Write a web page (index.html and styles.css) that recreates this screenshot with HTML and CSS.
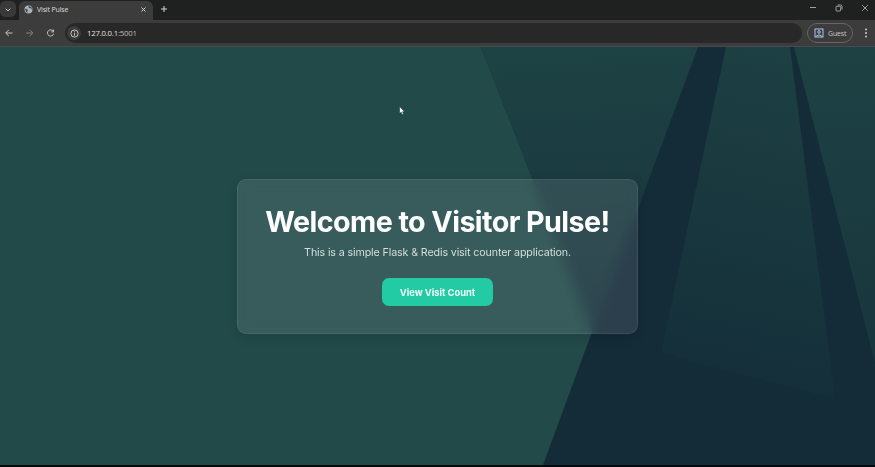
FILE: index.html
```html
<!DOCTYPE html>
<html lang="en">
<head>
<meta charset="utf-8">
<title>Visit Pulse</title>
<link rel="stylesheet" href="styles.css">
</head>
<body>
<header class="tabs">
  <div class="tab-search"><svg width="16" height="16" viewBox="0 0 16 16"><path d="M5.8 7.7l2.2 2.2 2.2-2.2"/></svg></div>
  <div class="tab">
    <svg class="globe" width="9" height="9" viewBox="0 0 9 9"><circle cx="4.5" cy="4.5" r="4"/><path d="M1 3.8l1.8.2 1.2 1.2-.8 1 .5 1.8-1.6-1zM4.8.9L4.4 2.4l1.3.8 1.2-.2.5 1.1.9.2-.8-2z"/></svg>
    <span class="tab-title">Visit Pulse</span>
    <svg class="close" width="7" height="7" viewBox="0 0 7 7"><path d="M1.5 1.5l4 4M5.5 1.5l-4 4"/></svg>
  </div>
  <svg class="new-tab" width="8" height="8" viewBox="0 0 8 8"><path d="M4 1v6M1 4h6"/></svg>
  <div class="window-buttons">
    <svg width="8" height="8" viewBox="0 0 8 8"><path d="M1 3.5h6"/></svg>
    <svg width="8" height="8" viewBox="0 0 8 8"><rect x="1" y="2.3" width="4.7" height="4.7" rx="1"/><path d="M2.5 1h3Q7 1 7 2.5v3"/></svg>
    <svg width="8" height="8" viewBox="0 0 8 8"><path d="M1.2 1.2l5.6 5.6M6.8 1.2L1.2 6.8"/></svg>
  </div>
</header>
<nav class="toolbar">
  <svg class="nav-icon" width="10" height="10" viewBox="0 0 10 10"><path d="M8.5 5H1.8M4.8 1.9L1.7 5l3.1 3.1"/></svg>
  <svg class="nav-icon dim" width="10" height="10" viewBox="0 0 10 10"><path d="M1 5h6.7M4.7 1.9L7.8 5 4.7 8.1"/></svg>
  <svg class="nav-icon" width="10" height="10" viewBox="0 0 10 10"><path d="M7.3 3.5A3.1 3.1 0 1 0 7.6 5.6M7.5 1.5v2.4H5.1"/></svg>
  <div class="address">
    <span class="info"><svg width="9" height="9" viewBox="0 0 9 9"><circle cx="4.5" cy="4.5" r="3.6"/><path d="M4.5 4.1v2.5M4.5 2.3v1"/></svg></span>
    <span class="url">127.0.0.1<span class="port">:5001</span></span>
  </div>
  <div class="guest">
    <svg width="10" height="10" viewBox="0 0 10 10"><rect x="1" y="1" width="8" height="8"/><circle cx="5" cy="4" r="1.3"/><path d="M2 8.3Q5 5.3 8 8.3"/></svg>
    <span>Guest</span>
  </div>
  <svg class="menu" width="4" height="10" viewBox="0 0 4 10"><circle cx="2" cy="1.5" r="1"/><circle cx="2" cy="5" r="1"/><circle cx="2" cy="8.5" r="1"/></svg>
</nav>
<main class="page">
  <svg class="backdrop" width="875" height="418" viewBox="0 0 875 418">
    <defs>
      <linearGradient id="g1" gradientUnits="userSpaceOnUse" x1="580" y1="0" x2="600" y2="285"><stop stop-color="#1e4344"/><stop offset="1" stop-color="#17323c"/></linearGradient>
      <linearGradient id="g2" gradientUnits="userSpaceOnUse" x1="780" y1="0" x2="700" y2="345"><stop stop-color="#1d4043"/><stop offset="1" stop-color="#142e39"/></linearGradient>
      <linearGradient id="g3" gradientUnits="userSpaceOnUse" x1="830" y1="0" x2="860" y2="320"><stop stop-color="#1e4244"/><stop offset="1" stop-color="#17353d"/></linearGradient>
    </defs>
    <path fill="#142b38" d="M0 0h875v418H0z"/>
    <path fill="#214a49" d="M0 0h481l111 285-49 133H0z"/>
    <path fill="url(#g1)" d="M481 0h217L592 285z"/>
    <path fill="url(#g2)" d="M726 0h64l45 352-174-46z"/>
    <path fill="url(#g3)" d="M794 0h81v316z"/>
  </svg>
  <section class="card">
    <h1>Welcome to Visitor Pulse!</h1>
    <p>This is a simple Flask &amp; Redis visit counter application.</p>
    <a class="button">View Visit Count</a>
  </section>
  <svg class="cursor" width="7" height="10" viewBox="0 0 7 10"><path d="M.6.6v7l1.6-1.4 1.1 2.5 1.3-.6-1.1-2.4h2.1z"/></svg>
</main>
</body>
</html>
```
FILE: styles.css
```css
* { box-sizing: border-box; }
body { margin: 0; width: 875px; height: 467px; overflow: hidden; background: #050b0c; font-family: Inter, "Liberation Sans", sans-serif; }
svg { display: block; flex: none; fill: none; stroke: #d5d7d6; stroke-width: 1; }
.tabs { height: 20px; display: flex; align-items: center; background: #1e211f; }
.tab-search { width: 16px; height: 16px; margin: -3px 3px 0 0; border-radius: 5px; background: #383938; }
.tab { width: 134px; height: 19px; margin-top: 1px; padding: 0 6px 3px 5px; display: flex; align-items: center; background: #3c3c3c; border-radius: 6px 6px 0 0; }
.globe { stroke: none; }
.globe circle { fill: #a9b4b9; }
.globe path { fill: #424b50; }
.tab-title { margin-left: 4px; font: 7px "Open Sans", sans-serif; letter-spacing: -.15px; color: #dedede; }
.close { margin-left: auto; }
.new-tab { margin: -3px 0 0 7px; }
.window-buttons { margin: -4px 6px 0 auto; display: flex; gap: 18px; }
.window-buttons svg { stroke-width: .7; }
.toolbar { height: 27px; padding: 0 7px 0 4px; display: flex; align-items: center; background: #3c3c3c; border-bottom: 1px solid #474b4b; }
.nav-icon { margin-right: 11px; stroke: #c3c4c3; }
.nav-icon.dim { stroke: #808180; }
.nav-icon:nth-child(3) { margin-right: 9px; }
.address { width: 737px; height: 20px; padding-left: 3px; display: flex; align-items: center; background: #282828; border-radius: 10px; }
.info { width: 14px; height: 14px; margin-left: -1px; display: grid; place-items: center; border-radius: 50%; background: #3b3b3b; }
.info svg { stroke-width: .9; }
.url { margin-left: 6px; font: 7.8px "Open Sans", sans-serif; letter-spacing: -.22px; color: #e2e2e2; }
.port { color: #bdbdbd; }
.guest { width: 46px; height: 20px; margin-left: 5px; padding-left: 6px; display: flex; align-items: center; gap: 4px; border: 1px solid #666; border-radius: 10px; font: 7px "Open Sans", sans-serif; letter-spacing: -.15px; color: #c5c7c9; }
.guest svg { stroke: #a9c3ed; }
.menu { margin-left: auto; fill: #cacaca; stroke: none; }
.page { position: relative; height: 418px; display: flex; justify-content: center; align-items: flex-start; padding-top: 132px; }
.backdrop { position: absolute; inset: 0; stroke: none; }
.card { position: relative; width: 401px; height: 155px; padding-top: 23px; text-align: center; color: #fff; background: rgba(255,255,255,.1); border: 1px solid rgba(255,255,255,.08); border-radius: 9px; box-shadow: 0 3px 12px rgba(0,0,0,.12); backdrop-filter: blur(6px); }
h1 { margin: 0; font-size: 28.7px; line-height: 37px; font-weight: 700; letter-spacing: -.02em; white-space: nowrap; }
p { margin: 4px 0 0; font-size: 10.7px; line-height: 17px; letter-spacing: -.13px; color: #d4dfdd; white-space: nowrap; }
.button { width: 111px; height: 28px; margin: 17px auto 0; display: flex; align-items: center; justify-content: center; background: #23cba5; border-radius: 7px; font-size: 9.3px; font-weight: 700; color: #f0fffa; }
.cursor { position: absolute; left: 399px; top: 59px; fill: #fff; stroke: #17292b; stroke-width: .5; }
```
